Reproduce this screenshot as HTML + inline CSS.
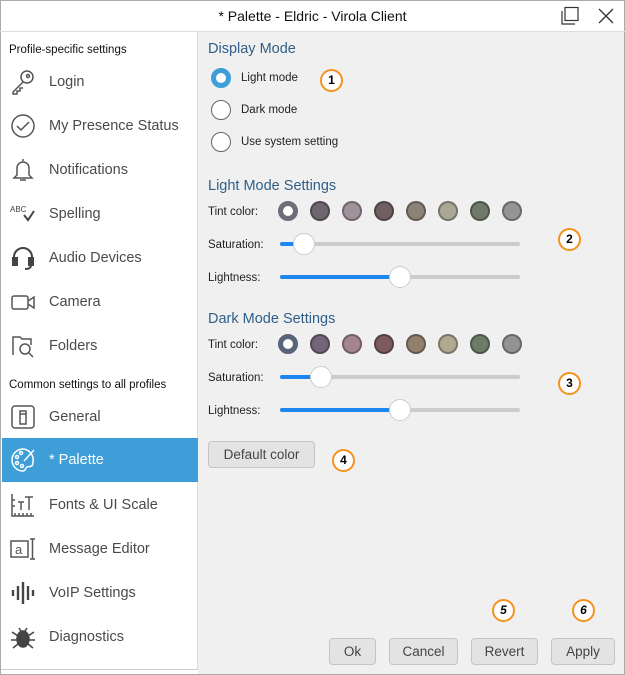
<!DOCTYPE html>
<html><head><meta charset="utf-8"><style>
*{box-sizing:border-box;margin:0;padding:0}
body{width:625px;height:675px;background:#fff;font-family:"Liberation Sans",sans-serif;position:relative;overflow:hidden}
.win{position:absolute;left:0;top:0;width:625px;height:675px;border:1px solid #aaa}
.title{position:absolute;left:0;top:0;width:625px;height:32px;text-align:center;line-height:32px;font-size:14px;color:#111;border-bottom:1px solid #ddd}
.side{position:absolute;left:1px;top:32px;width:197px;height:638px;background:#fff;border-right:1px solid #ddd;border-bottom:1px solid #ccc}
.panel{position:absolute;left:198px;top:32px;width:426px;height:642px;background:#f0f0f0}
.sec{position:absolute;left:8px;font-size:11.5px;color:#111}
.item{position:absolute;left:1px;width:196px;height:44px;font-size:14.5px;color:#4a4a4a}
.item span{position:absolute;left:47px;top:14px}
.item svg{position:absolute;left:8px;top:9px}
.sel{background:#3e9ed8;color:#fff}
.abs{position:absolute}
.h{font-size:14.5px;color:#2f5f88}
.lbl{font-size:11.5px;color:#222;margin-top:1px}
.radio{position:absolute;width:20px;height:20px;border-radius:50%;border:1.5px solid #666;background:#fff}
.sw{position:absolute;width:20px;height:20px;border-radius:50%;border:2px solid rgba(0,0,0,.3)}
.track{position:absolute;height:4px;border-radius:2px;background:#ccc;left:280px;width:240px}
.fill{position:absolute;height:4px;border-radius:2px;background:#1e86f0;left:280px}
.thumb{position:absolute;width:22px;height:22px;border-radius:50%;background:#fff;border:1px solid #ccc}
.btn{position:absolute;height:27px;border:1px solid #c4c4c4;border-radius:4px;background:#e3e3e3;font-size:13.5px;color:#444;text-align:center;line-height:25px}
.bd{position:absolute;width:23px;height:23px;border-radius:50%;border:2.5px solid #f5911e;background:#fff;font:bold 12px "Liberation Sans",sans-serif;text-align:center;line-height:18px;color:#000}
</style></head><body>
<div class="win"></div>
<div class="title">* Palette - Eldric - Virola Client</div>
<svg class="abs" style="left:560px;top:6px" width="20" height="20"><rect x="5" y="1.5" width="13" height="13" fill="none" stroke="#333" stroke-width="1.2"/><path d="M2 5v13h13" fill="none" stroke="#333" stroke-width="1.2"/></svg>
<svg class="abs" style="left:597px;top:7px" width="18" height="18"><path d="M2 2L16 16M16 2L2 16" stroke="#333" stroke-width="1.3"/></svg>
<div class="side">
<div class="sec" style="top:12px">Profile-specific settings</div>
<div class="item" style="top:28px"><svg width="26" height="26" fill="none" stroke="#555" stroke-width="1.5"><circle cx="17" cy="8" r="6"/><circle cx="18" cy="7" r="1.5"/><path d="M13 13L3 23v2h4v-3h3v-3h3"/></svg><span>Login</span></div>
<div class="item" style="top:72px"><svg width="26" height="26" fill="none" stroke="#555" stroke-width="1.5"><circle cx="13" cy="13" r="11"/><path d="M7 13l4 4 8-8"/></svg><span>My Presence Status</span></div>
<div class="item" style="top:116px"><svg width="26" height="26" fill="none" stroke="#555" stroke-width="1.5"><path d="M13 2v2M7 18v-7a6 6 0 0 1 12 0v7l3 3H4z M10 23h6"/></svg><span>Notifications</span></div>
<div class="item" style="top:160px"><svg width="26" height="26"><text x="0" y="11" font-size="8" font-family="Liberation Sans" fill="#444">ABC</text><path d="M14 14l4 5 6-9" stroke="#444" stroke-width="2" fill="none"/></svg><span>Spelling</span></div>
<div class="item" style="top:204px"><svg width="26" height="26" fill="none" stroke="#444" stroke-width="2"><path d="M4 16v-4a9 9 0 0 1 18 0v4"/><rect x="3" y="13" width="4" height="7" fill="#444"/><rect x="19" y="13" width="4" height="7" fill="#444"/><path d="M21 20q0 4-6 4"/></svg><span>Audio Devices</span></div>
<div class="item" style="top:248px"><svg width="26" height="26" fill="none" stroke="#555" stroke-width="1.5"><rect x="2" y="7" width="16" height="13" rx="2"/><path d="M18 12l6-4v11l-6-4"/></svg><span>Camera</span></div>
<div class="item" style="top:292px"><svg width="26" height="26" fill="none" stroke="#555" stroke-width="1.5"><path d="M3 22V4h7l2 2h9v6"/><circle cx="15" cy="16" r="5"/><path d="M19 20l4 4"/></svg><span>Folders</span></div>
<div class="sec" style="top:347px">Common settings to all profiles</div>
<div class="item" style="top:363px"><svg width="26" height="26" fill="none" stroke="#555" stroke-width="1.5"><rect x="2" y="2" width="22" height="22" rx="3"/><rect x="10" y="7" width="6" height="13"/><path d="M10 10h6"/></svg><span>General</span></div>
<div class="item sel" style="top:406px"><svg width="26" height="26" fill="none" stroke="#fff" stroke-width="1.5"><path d="M13 2a11 11 0 1 0 0 22c3 0 2-3 4-4s6 1 6-5A11 11 0 0 0 13 2z"/><circle cx="7" cy="10" r="1.5"/><circle cx="11" cy="6" r="1.5"/><circle cx="7" cy="16" r="1.5"/><circle cx="12" cy="19" r="1.5"/><path d="M24 3l-10 11"/></svg><span style="color:#fff">* Palette</span></div>
<div class="item" style="top:451px"><svg width="26" height="26" fill="none" stroke="#555" stroke-width="1.5"><path d="M2 2v22h22M5 24v-3M9 24v-3M13 24v-3M17 24v-3M21 24v-3M8 10h6M11 10v8M15 5h8M19 5v13M2 8h3M2 14h3"/></svg><span>Fonts &amp; UI Scale</span></div>
<div class="item" style="top:495px"><svg width="26" height="26" fill="none" stroke="#555" stroke-width="1.5"><rect x="1" y="5" width="17" height="16"/><text x="5" y="18" font-size="13" fill="#555" stroke="none" font-family="Liberation Sans">a</text><path d="M20 3h5M22.5 3v20M20 23h5"/></svg><span>Message Editor</span></div>
<div class="item" style="top:539px"><svg width="26" height="26" stroke="#444" stroke-width="2.4"><path d="M3 10v6M8 6v14M13 2v22M18 6v14M23 10v6"/></svg><span>VoIP Settings</span></div>
<div class="item" style="top:583px"><svg width="26" height="26" fill="#444" stroke="#444" stroke-width="1.5"><ellipse cx="13" cy="15" rx="6" ry="8"/><path d="M2 8l6 4M24 8l-6 4M1 16h6M25 16h-6M3 24l5-4M23 24l-5-4M9 4l2 3M17 4l-2 3"/></svg><span>Diagnostics</span></div>
</div>
<div class="panel"></div>
<div class="abs h" style="left:208px;top:41px">Display Mode</div>
<div class="radio" style="left:211px;top:68px;border:5px solid #3e9ed8"></div>
<div class="abs lbl" style="left:241px;top:71px">Light mode</div>
<div class="radio" style="left:211px;top:100px"></div>
<div class="abs lbl" style="left:241px;top:103px">Dark mode</div>
<div class="radio" style="left:211px;top:132px"></div>
<div class="abs lbl" style="left:241px;top:135px">Use system setting</div>
<div class="abs h" style="left:208px;top:178px">Light Mode Settings</div>
<div class="abs lbl" style="left:208px;top:205px">Tint color:</div>
<div class="sw" style="left:278px;top:201px;background:#fff;border:5px solid #6d6e78"></div>
<div class="sw" style="left:310px;top:201px;background:#706670"></div>
<div class="sw" style="left:342px;top:201px;background:#a0939c"></div>
<div class="sw" style="left:374px;top:201px;background:#6f5f60"></div>
<div class="sw" style="left:406px;top:201px;background:#8b8278"></div>
<div class="sw" style="left:438px;top:201px;background:#aaa796"></div>
<div class="sw" style="left:470px;top:201px;background:#6f7a6b"></div>
<div class="sw" style="left:502px;top:201px;background:#959595"></div>
<div class="abs lbl" style="left:208px;top:238px">Saturation:</div>
<div class="track" style="top:242px"></div><div class="fill" style="top:242px;width:24px"></div><div class="thumb" style="left:293px;top:233px"></div>
<div class="abs lbl" style="left:208px;top:271px">Lightness:</div>
<div class="track" style="top:275px"></div><div class="fill" style="top:275px;width:120px"></div><div class="thumb" style="left:389px;top:266px"></div>
<div class="abs h" style="left:208px;top:311px">Dark Mode Settings</div>
<div class="abs lbl" style="left:208px;top:338px">Tint color:</div>
<div class="sw" style="left:278px;top:334px;background:#fff;border:5px solid #5a6478"></div>
<div class="sw" style="left:310px;top:334px;background:#75657a"></div>
<div class="sw" style="left:342px;top:334px;background:#a5858f"></div>
<div class="sw" style="left:374px;top:334px;background:#7a5a5e"></div>
<div class="sw" style="left:406px;top:334px;background:#937f6d"></div>
<div class="sw" style="left:438px;top:334px;background:#b1aa90"></div>
<div class="sw" style="left:470px;top:334px;background:#6c7c66"></div>
<div class="sw" style="left:502px;top:334px;background:#939393"></div>
<div class="abs lbl" style="left:208px;top:371px">Saturation:</div>
<div class="track" style="top:375px"></div><div class="fill" style="top:375px;width:41px"></div><div class="thumb" style="left:310px;top:366px"></div>
<div class="abs lbl" style="left:208px;top:404px">Lightness:</div>
<div class="track" style="top:408px"></div><div class="fill" style="top:408px;width:120px"></div><div class="thumb" style="left:389px;top:399px"></div>
<div class="btn" style="left:208px;top:441px;width:107px">Default color</div>
<div class="btn" style="left:329px;top:638px;width:47px">Ok</div>
<div class="btn" style="left:389px;top:638px;width:69px">Cancel</div>
<div class="btn" style="left:471px;top:638px;width:67px">Revert</div>
<div class="btn" style="left:551px;top:638px;width:64px">Apply</div>
<div class="bd" style="left:320px;top:69px">1</div>
<div class="bd" style="left:558px;top:228px">2</div>
<div class="bd" style="left:558px;top:372px">3</div>
<div class="bd" style="left:332px;top:449px">4</div>
<div class="bd" style="left:492px;top:599px;font-style:italic">5</div>
<div class="bd" style="left:572px;top:599px;font-style:italic">6</div>
</body></html>
